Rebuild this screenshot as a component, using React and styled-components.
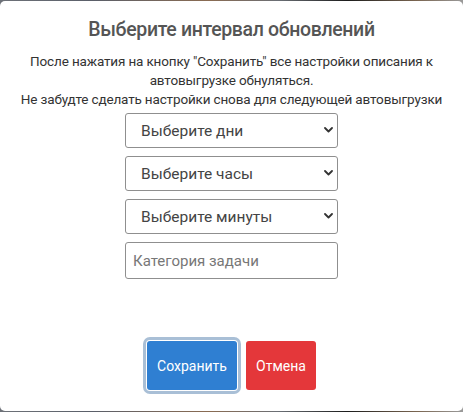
import styled, { createGlobalStyle } from "styled-components";

const Global = createGlobalStyle`
  html, body {
    margin: 0;
    padding: 0;
  }
  body {
    width: 463px;
    height: 412px;
    overflow: hidden;
    font-family: Roboto, "Noto Sans", sans-serif;
    background: linear-gradient(90deg, #6d7178 0%, #5a5f69 20%, #8a6b52 45%, #6b6f75 60%, #1c1c1c 75%, #7a6550 90%, #9a9a9a 100%);
  }
`;

const Backdrop = styled.div`
  padding-top: 1px;
  height: 411px;
  box-sizing: border-box;
`;

const Modal = styled.div`
  height: 410px;
  background: #fff;
  border-radius: 5px;
  box-sizing: border-box;
  padding: 16px 0 0;
  display: flex;
  flex-direction: column;
  align-items: center;
`;

const Title = styled.h2`
  margin: 0;
  font-size: 19.5px;
  letter-spacing: -0.35px;
  line-height: 26px;
  font-weight: 500;
  color: #555;
`;

const Note = styled.p`
  margin: 9px 0 0;
  font-size: 13.5px;
  letter-spacing: -0.15px;
  line-height: 19px;
  color: #333;
  text-align: center;
`;

const Fields = styled.div`
  margin-top: 4px;
  width: 213px;
  display: flex;
  flex-direction: column;
  gap: 8px;
`;

const SelectWrap = styled.div`
  position: relative;
  height: 35px;

  & svg {
    position: absolute;
    right: 5px;
    top: 14px;
    pointer-events: none;
  }
`;

const Select = styled.select`
  appearance: none;
  width: 100%;
  height: 35px;
  box-sizing: border-box;
  border: 1px solid #8f8f8f;
  border-radius: 3px;
  background: #fff;
  padding: 0 24px 0 15px;
  font-family: inherit;
  font-size: 15.5px;
  color: #444;
  outline: none;
`;

const Input = styled.input`
  width: 100%;
  height: 37px;
  box-sizing: border-box;
  border: 1px solid #8f8f8f;
  border-radius: 3px;
  padding: 0 7px;
  font-family: inherit;
  font-size: 15px;
  outline: none;

  &::placeholder {
    color: #777;
  }
`;

const Actions = styled.div`
  margin-top: 62px;
  display: flex;
  align-items: center;
  gap: 9px;
`;

const Button = styled.button`
  height: 49px;
  padding: 0 10px;
  border: none;
  border-radius: 3px;
  font-family: inherit;
  font-size: 14px;
  color: #fff;
  background: ${(p) => (p.$danger ? "#e4373a" : "#2f7fd2")};
  box-shadow: ${(p) => (p.$focused ? "0 0 0 1px #fff, 0 0 0 4px #a9bfd6" : "none")};
  cursor: pointer;
`;

const Chevron = () => (
  <svg width="9" height="6" viewBox="0 0 9 6">
    <path d="M1 1l3.5 3.5L8 1" fill="none" stroke="#333" strokeWidth="1.8" strokeLinecap="round" strokeLinejoin="round" />
  </svg>
);

const DropField = ({ label }) => (
  <SelectWrap>
    <Select defaultValue="">
      <option value="" disabled>{label}</option>
    </Select>
    <Chevron />
  </SelectWrap>
);

export default function App() {
  return (
    <>
      <Global />
      <Backdrop>
        <Modal>
          <Title>Выберите интервал обновлений</Title>
          <Note>
            После нажатия на кнопку "Сохранить" все настройки описания к
            <br />
            автовыгрузке обнуляться.
            <br />
            Не забудте сделать настройки снова для следующей автовыгрузки
          </Note>
          <Fields>
            <DropField label="Выберите дни" />
            <DropField label="Выберите часы" />
            <DropField label="Выберите минуты" />
            <Input placeholder="Категория задачи" />
          </Fields>
          <Actions>
            <Button $focused style={{ width: 90 }}>Сохранить</Button>
            <Button $danger style={{ width: 70 }}>Отмена</Button>
          </Actions>
        </Modal>
      </Backdrop>
    </>
  );
}
